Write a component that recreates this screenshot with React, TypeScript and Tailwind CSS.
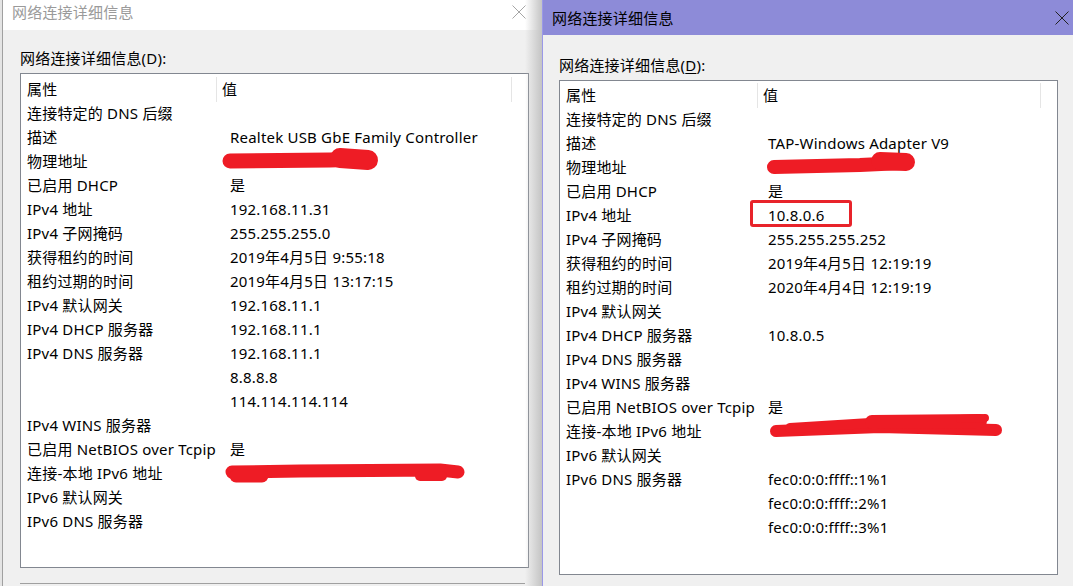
import React from 'react'

type Row = [string, string]

const leftRows: Row[] = [
  ['连接特定的 DNS 后缀', ''],
  ['描述', 'Realtek USB GbE Family Controller'],
  ['物理地址', ''],
  ['已启用 DHCP', '是'],
  ['IPv4 地址', '192.168.11.31'],
  ['IPv4 子网掩码', '255.255.255.0'],
  ['获得租约的时间', '2019年4月5日 9:55:18'],
  ['租约过期的时间', '2019年4月5日 13:17:15'],
  ['IPv4 默认网关', '192.168.11.1'],
  ['IPv4 DHCP 服务器', '192.168.11.1'],
  ['IPv4 DNS 服务器', '192.168.11.1'],
  ['', '8.8.8.8'],
  ['', '114.114.114.114'],
  ['IPv4 WINS 服务器', ''],
  ['已启用 NetBIOS over Tcpip', '是'],
  ['连接-本地 IPv6 地址', ''],
  ['IPv6 默认网关', ''],
  ['IPv6 DNS 服务器', ''],
]

const rightRows: Row[] = [
  ['连接特定的 DNS 后缀', ''],
  ['描述', 'TAP-Windows Adapter V9'],
  ['物理地址', ''],
  ['已启用 DHCP', '是'],
  ['IPv4 地址', '10.8.0.6'],
  ['IPv4 子网掩码', '255.255.255.252'],
  ['获得租约的时间', '2019年4月5日 12:19:19'],
  ['租约过期的时间', '2020年4月4日 12:19:19'],
  ['IPv4 默认网关', ''],
  ['IPv4 DHCP 服务器', '10.8.0.5'],
  ['IPv4 DNS 服务器', ''],
  ['IPv4 WINS 服务器', ''],
  ['已启用 NetBIOS over Tcpip', '是'],
  ['连接-本地 IPv6 地址', ''],
  ['IPv6 默认网关', ''],
  ['IPv6 DNS 服务器', 'fec0:0:0:ffff::1%1'],
  ['', 'fec0:0:0:ffff::2%1'],
  ['', 'fec0:0:0:ffff::3%1'],
]

function CloseIcon() {
  return (
    <svg width="14" height="14" viewBox="0 0 14 14" aria-hidden>
      <path d="M0.5 0.5 L13.5 13.5 M13.5 0.5 L0.5 13.5" stroke="#222" strokeWidth="1" fill="none" />
    </svg>
  )
}

function DetailList({
  rows,
  colWidth,
  padTop,
  valuePad,
}: {
  rows: Row[]
  colWidth: number
  padTop: string
  valuePad: string
}) {
  return (
    <div className={`h-[495px] border border-[#828790] bg-white ${padTop}`}>
      <div className="flex h-[24px] items-center text-black">
        <div className="flex h-full shrink-0 items-center pl-[6px]" style={{ width: colWidth }}>
          属性
        </div>
        <div className="h-[25px] w-px bg-[#e5e5e5]" />
        <div className="flex-1 pl-[5px]">值</div>
        <div className="mr-[16px] h-[25px] w-px bg-[#e5e5e5]" />
      </div>
      {rows.map(([k, v], i) => (
        <div key={i} className="flex h-[24px] items-center whitespace-nowrap text-black">
          <div className="shrink-0 pl-[6px]" style={{ width: colWidth + 1 }}>
            {k}
          </div>
          <div className={valuePad}>{v}</div>
        </div>
      ))}
    </div>
  )
}

export default function App() {
  return (
    <div
      className="relative flex h-[586px] w-[1073px] overflow-hidden bg-[#f0f0f0] text-[15px] leading-[24px] tracking-[0.2px]"
      style={{ fontFamily: '"Noto Sans", "Noto Sans CJK SC", sans-serif' }}
    >
      {/* window behind, barely visible */}
      <div className="w-[3px] shrink-0 border-r border-[#a0a0a0] bg-[#e4e4e4]" />

      {/* left dialog (inactive) */}
      <div className="relative flex w-[539px] shrink-0 flex-col">
        <div className="flex h-[30px] items-center justify-between bg-white pl-[9px] pr-[16px]">
          <span className="-mt-[6px] text-[#9a9a9a]">网络连接详细信息</span>
          <span className="-mt-[7px] opacity-40">
            <CloseIcon />
          </span>
        </div>
        <div className="flex-1 bg-[#f0f0f0] pl-[17px] pr-[14px]">
          <div className="mt-[16px] h-[24px]">网络连接详细信息(D):</div>
          <div className="mt-[3px] w-[509px]">
            <DetailList rows={leftRows} colWidth={195} padTop="pt-[3px]" valuePad="pl-[13px]" />
          </div>
          <div className="mt-[15px] w-[505px] border-t border-[#a0a0a0]" />
        </div>
        <div className="pointer-events-none absolute right-0 top-0 h-full w-[17px] bg-gradient-to-r from-transparent to-[#c4c4c4]" />
      </div>

      {/* right dialog (active) */}
      <div className="flex flex-1 flex-col border-l border-[#9a98e8]">
        <div className="flex h-[35px] items-center justify-between bg-[#8d8bd8] pl-[9px] pr-[4px]">
          <span className="text-black">网络连接详细信息</span>
          <CloseIcon />
        </div>
        <div className="flex-1 pl-[16px]">
          <div className="mt-[18px] h-[24px]">
            网络连接详细信息(<span className="underline underline-offset-2">D</span>):
          </div>
          <div className="mt-[3px] w-[499px]">
            <DetailList rows={rightRows} colWidth={197} padTop="pt-[2px]" valuePad="pl-[10px]" />
          </div>
        </div>
      </div>

      {/* annotations drawn over the screenshot */}
      <div className="pointer-events-none absolute left-[750px] top-[200px] h-[27px] w-[102px] rounded-[3px] border-[3px] border-[#e8232a]" />
      <svg className="pointer-events-none absolute left-0 top-0" width="1073" height="586" aria-hidden>
        <g stroke="#ee1c25" strokeLinecap="round" strokeLinejoin="round" fill="none">
          <path d="M230 161 L330 160 L362 159" strokeWidth="15" />
          <path d="M340 158 L368 160" strokeWidth="20" />
          <path d="M232 472 L300 471 L440 470 L458 472" strokeWidth="13" />
          <path d="M236 476 L262 476" strokeWidth="13" />
          <path d="M420 476 L442 476" strokeWidth="10" />
          <path d="M774 167 L860 165 L902 163" strokeWidth="14" />
          <path d="M880 161 L906 162" strokeWidth="18" />
          <path d="M776 431 L880 427 L996 430" strokeWidth="12" />
          <path d="M790 428 L870 423" strokeWidth="10" />
          <path d="M872 422 L980 421" strokeWidth="14" />
          <path d="M960 419 L985 418" strokeWidth="8" />
        </g>
      </svg>
    </div>
  )
}
